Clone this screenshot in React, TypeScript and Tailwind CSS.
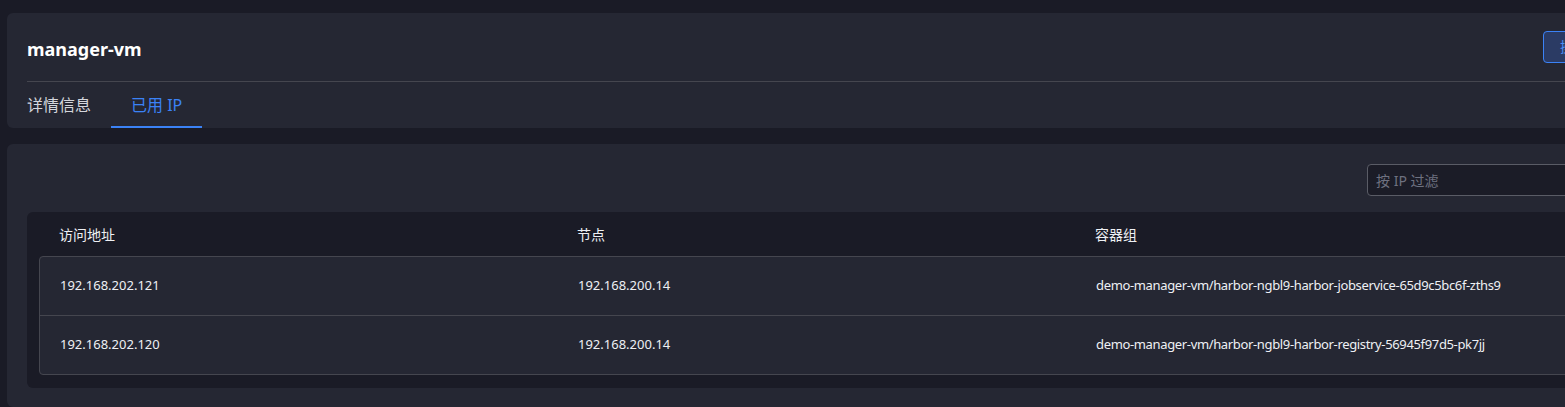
import React from 'react';

interface IpRow {
  address: string;
  node: string;
  pod: string;
}

const rows: IpRow[] = [
  {
    address: '192.168.202.121',
    node: '192.168.200.14',
    pod: 'demo-manager-vm/harbor-ngbl9-harbor-jobservice-65d9c5bc6f-zths9',
  },
  {
    address: '192.168.202.120',
    node: '192.168.200.14',
    pod: 'demo-manager-vm/harbor-ngbl9-harbor-registry-56945f97d5-pk7jj',
  },
];

const font = { fontFamily: '"Noto Sans", "Noto Sans CJK SC", sans-serif' };

const App: React.FC = () => {
  return (
    <div
      className="w-[1565px] h-[407px] overflow-hidden bg-[#1a1b26] pl-[7px] pt-[13px] text-[#e4e6ec]"
      style={font}
    >
      <div className="w-[1620px] flex flex-col gap-4">
        {/* header panel */}
        <div className="bg-[#252733] rounded-md px-5">
          <div className="h-[69px] flex items-center justify-between border-b border-[#45464f]">
            <h1 className="text-[18px] font-bold text-white leading-6 pt-1">manager-vm</h1>
            <button className="h-8 px-4 mr-[2px] rounded-sm border border-[#3b82f6] bg-[#2b3b64] text-[#4b8ef7] text-sm">
              操作
            </button>
          </div>
          <div className="flex h-[46px]">
            <div className="pr-5 flex items-center text-[16px] text-[#d4d6dc]">详情信息</div>
            <div className="px-5 flex items-center text-[16px] text-[#3b82f6] border-b-2 border-[#3b82f6] pt-[2px]">
              已用 IP
            </div>
          </div>
        </div>

        {/* ip table panel */}
        <div className="bg-[#252733] rounded-md px-5 pt-5 pb-[19px]">
          <div className="flex justify-end">
            <input
              className="w-[240px] h-8 bg-[#1b1c27] border border-[#5a5c66] rounded-sm px-2 text-sm text-[#e4e6ec] placeholder-[#6e7180] outline-none"
              placeholder="按 IP 过滤"
            />
          </div>
          <div className="mt-4 bg-[#1a1b26] rounded-md pb-[13px]">
            <div className="h-[44px] grid grid-cols-[518px_518px_1fr] items-center pl-8 text-[14px] text-[#eef0f4]">
              <div>访问地址</div>
              <div>节点</div>
              <div>容器组</div>
            </div>
            <div className="mx-3 border border-[#45464f] rounded bg-[#252733]">
              {rows.map((r, i) => (
                <div
                  key={r.address}
                  className={`grid grid-cols-[518px_518px_1fr] items-center pl-5 text-[13px] text-[#eef0f4] ${
                    i > 0 ? 'h-[59px] border-t border-[#45464f]' : 'h-[58px]'
                  }`}
                >
                  <div>{r.address}</div>
                  <div>{r.node}</div>
                  <div className="tracking-[-0.35px]">{r.pod}</div>
                </div>
              ))}
            </div>
          </div>
        </div>
      </div>
    </div>
  );
};

export default App;
